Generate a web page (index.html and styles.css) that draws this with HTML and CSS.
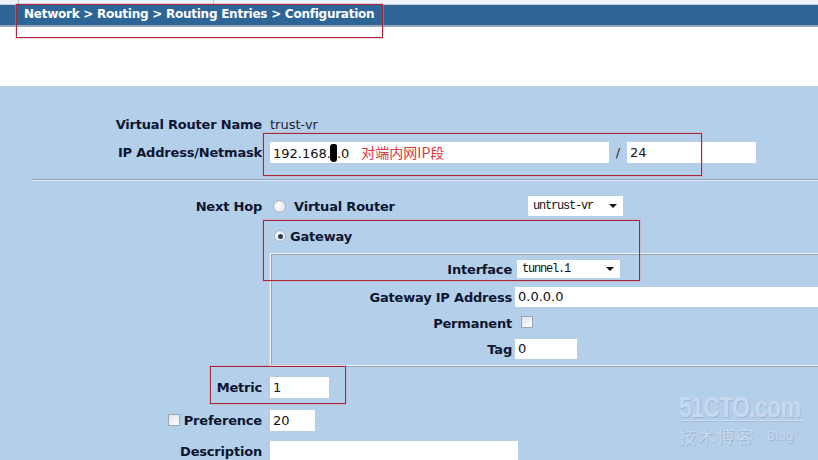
FILE: index.html
```html
<!DOCTYPE html>
<html>
<head>
<meta charset="utf-8">
<link rel="stylesheet" href="styles.css">
</head>
<body>
<div class="page">
  <div class="topstrip"><span class="tab t1"></span><span class="tab t2"></span></div>
  <div class="crumbbar">Network &gt; Routing &gt; Routing Entries &gt; Configuration</div>
  <div class="whitespace"></div>
  <div class="panel">
    <div class="row r-vrn">
      <div class="label">Virtual Router Name</div>
      <div class="value">trust-vr</div>
    </div>
    <div class="row r-ip">
      <div class="label">IP Address/Netmask</div>
      <div class="content ipline">
        <div class="input ip">192.168.<span class="blob"></span>.0<span class="note">对端内网IP段</span></div>
        <span class="slash">/</span>
        <div class="input mask">24</div>
      </div>
    </div>
    <div class="rule"></div>
    <div class="row r-nh">
      <div class="label">Next Hop</div>
      <div class="content nhline">
        <span class="radio"></span>
        <span class="blabel">Virtual Router</span>
        <div class="select vr">untrust-vr<span class="arrow"></span></div>
      </div>
    </div>
    <div class="row r-gw">
      <div class="label"></div>
      <div class="content gwline">
        <span class="radio checked"></span>
        <span class="blabel">Gateway</span>
      </div>
    </div>
    <div class="gwbox">
      <div class="irow i-if">
        <div class="label">Interface</div>
        <div class="select tun">tunnel.1<span class="arrow"></span></div>
      </div>
      <div class="irow i-gip">
        <div class="label">Gateway IP Address</div>
        <div class="input gip">0.0.0.0</div>
      </div>
      <div class="irow i-perm">
        <div class="label">Permanent</div>
        <div><span class="check"></span></div>
      </div>
      <div class="irow i-tag">
        <div class="label">Tag</div>
        <div class="input tag">0</div>
      </div>
    </div>
    <div class="row r-metric">
      <div class="label">Metric</div>
      <div class="input metric">1</div>
    </div>
    <div class="row r-pref">
      <div class="label"><span class="check"></span>Preference</div>
      <div class="input pref">20</div>
    </div>
    <div class="row r-desc">
      <div class="label">Description</div>
      <div class="input desc"></div>
    </div>
  </div>

  <div class="mark mark-a"></div>
  <div class="mark mark-b"></div>
  <div class="mark mark-c"></div>
  <div class="mark mark-d"></div>

  <div class="watermark">
    <div class="wm-top">51CTO.com</div>
    <div class="wm-line"></div>
    <div class="wm-bottom"><span class="wm-cn">技术博客</span><span class="wm-blog">Blog</span></div>
  </div>
</div>
</body>
</html>
```
FILE: styles.css
```css
html, body {
  margin: 0;
  padding: 0;
  width: 818px;
  height: 460px;
  overflow: hidden;
  background: #b4cfea;
}
.page {
  position: relative;
  width: 818px;
  height: 460px;
  overflow: hidden;
  font-family: "DejaVu Sans", Verdana, sans-serif;
  font-size: 12px;
  color: #0d1630;
}
.topstrip {
  height: 5px;
  background: #eef3f9;
  position: relative;
}
.tab {
  position: absolute;
  top: 0;
  height: 4px;
  border-right: 1px solid #b9c4d2;
  border-bottom: 1px solid #c8d2de;
}
.t1 { left: 0; width: 18px; }
.t2 { left: 213px; width: 625px; border-left: 1px solid #b9c4d2; }
.crumbbar {
  height: 20px;
  line-height: 18px;
  background: #2e6597;
  color: #fff;
  font-weight: bold;
  font-size: 12px;
  letter-spacing: -0.25px;
  padding-left: 24px;
  border-bottom: 2px solid #9aa7b8;
  white-space: nowrap;
}
.whitespace {
  height: 59px;
  background: #fff;
}
.panel {
  height: 374px;
  background: #b4cfea;
  padding-top: 26px;
  box-sizing: border-box;
}
.row {
  display: grid;
  grid-template-columns: 262px auto;
  column-gap: 8px;
  align-items: center;
}
.label {
  text-align: right;
  font-weight: bold;
  white-space: nowrap;
  color: #0d1630;
  font-size: 13px;
  letter-spacing: -0.2px;
}
.value {
  color: #1e2430;
  font-size: 13px;
}
.r-vrn { height: 24px; }
.r-ip { height: 22px; margin-top: 5px; }
.content { display: flex; align-items: center; }
.input {
  background: #fff;
  height: 21px;
  line-height: 21px;
  box-sizing: border-box;
  padding-left: 3px;
  font-size: 13px;
  color: #111;
  white-space: nowrap;
  position: relative;
}
.ip { width: 339px; }
.blob {
  display: inline-block;
  width: 7px;
  height: 18px;
  background: #000;
  border-radius: 3px 2px 3px 4px;
  vertical-align: -4px;
  margin-left: -1px;
}
.note {
  color: #e0353a;
  font-family: "Noto Sans CJK SC", sans-serif;
  font-size: 14px;
  margin-left: 12px;
}
.slash {
  width: 18px;
  text-align: center;
  font-size: 13px;
  color: #222;
}
.mask { width: 129px; }
.rule {
  margin-top: 16px;
  margin-left: 32px;
  height: 0;
  border-top: 1px solid #8fa4bb;
  border-bottom: 1px solid #e4edf6;
}
.r-nh { height: 22px; margin-top: 14px; }
.nhline { width: 353px; }
.radio {
  width: 13px;
  height: 13px;
  border-radius: 50%;
  border: 1px solid #a8b4c0;
  background: radial-gradient(circle at 40% 40%, #ffffff, #d6dee7);
  margin-left: 3px;
  margin-right: 8px;
  box-sizing: border-box;
  flex: none;
  position: relative;
}
.radio.checked {
  width: 12px;
  height: 12px;
  margin-left: 4px;
  margin-right: 4px;
}
.radio.checked::after {
  content: "";
  position: absolute;
  left: 2.5px;
  top: 2.5px;
  width: 5px;
  height: 5px;
  border-radius: 50%;
  background: #2a3a52;
}
.blabel {
  font-weight: bold;
  font-size: 13px;
  letter-spacing: -0.2px;
  color: #0d1630;
}
.select {
  background: #fff;
  height: 20px;
  line-height: 20px;
  box-sizing: border-box;
  padding-left: 5px;
  font-family: "Liberation Mono", monospace;
  font-size: 12px;
  letter-spacing: -1.2px;
  color: #111;
  position: relative;
}
.vr { width: 95px; margin-left: auto; }
.arrow {
  position: absolute;
  right: 6px;
  top: 8px;
  width: 0;
  height: 0;
  border-left: 4px solid transparent;
  border-right: 4px solid transparent;
  border-top: 4px solid #111;
}
.r-gw { height: 22px; margin-top: 8px; }
.gwbox {
  margin-top: 6px;
  margin-left: 270px;
  margin-right: -20px;
  border-top: 1px solid #f4f8fc;
  border-left: 1px solid #f4f8fc;
  border-bottom: 1px solid #f4f8fc;
  box-shadow: inset 1px 1px 0 #8fa4bb, 0 1px 0 #8fa4bb, -1px 0 0 #c6d6e8;
  padding-top: 5px;
  padding-bottom: 6px;
  box-sizing: border-box;
  height: 113px;
}
.irow {
  display: grid;
  grid-template-columns: 241px auto;
  column-gap: 3px;
  align-items: center;
  height: 20px;
}
.i-gip { margin-top: 8px; }
.i-perm { margin-top: 6px; }
.i-tag { margin-top: 6px; }
.tun { width: 103px; margin-left: 2px; height: 18px; line-height: 18px; }
.tun .arrow { top: 7px; }
.gip { width: 320px; height: 20px; line-height: 20px; }
.tag { width: 62px; height: 20px; line-height: 20px; }
.check {
  display: inline-block;
  width: 12px;
  height: 12px;
  border: 1px solid #9aa6b2;
  background: linear-gradient(135deg, #dfe5ec, #ffffff);
  box-sizing: border-box;
  vertical-align: -1px;
}
.i-perm .check { margin-left: 6px; }
.r-metric { height: 21px; margin-top: 11px; }
.metric { width: 59px; }
.r-pref { height: 21px; margin-top: 12px; }
.r-pref .check { margin-right: 4px; vertical-align: -1px; }
.pref { width: 45px; }
.r-desc { height: 21px; margin-top: 10px; }
.desc { width: 248px; }

.mark {
  position: absolute;
  border: 1px solid #a3283a;
  box-shadow: 0 0 0 1px rgba(230, 140, 150, 0.35);
  pointer-events: none;
}
.mark-a { left: 16px; top: 4px; width: 365px; height: 32px; }
.mark-b { left: 263px; top: 133px; width: 437px; height: 41px; }
.mark-c { left: 263px; top: 220px; width: 375px; height: 59px; }
.mark-d { left: 210px; top: 366px; width: 134px; height: 36px; }

.watermark {
  position: absolute;
  left: 679px;
  top: 391px;
  width: 130px;
  color: #c6d9ee;
  text-shadow: 1px 1px 0 #9fb8d3;
}
.wm-top {
  font-family: "Liberation Sans", sans-serif;
  font-weight: bold;
  font-size: 29px;
  line-height: normal;
  letter-spacing: -1px;
  transform: scaleX(0.8);
  transform-origin: left top;
  width: 150px;
  white-space: nowrap;
}
.wm-line {
  width: 125px;
  height: 0;
  border-top: 1px solid #d2e1f2;
  border-bottom: 1px solid #a5bcd6;
  margin-top: -4px;
}
.wm-bottom {
  display: flex;
  align-items: center;
  margin-top: 1px;
}
.wm-cn {
  font-family: "Noto Sans CJK SC", sans-serif;
  font-size: 17px;
  line-height: normal;
  letter-spacing: 2px;
}
.wm-blog {
  font-family: "DejaVu Sans", sans-serif;
  font-size: 12px;
  margin-left: 12px;
}
```
